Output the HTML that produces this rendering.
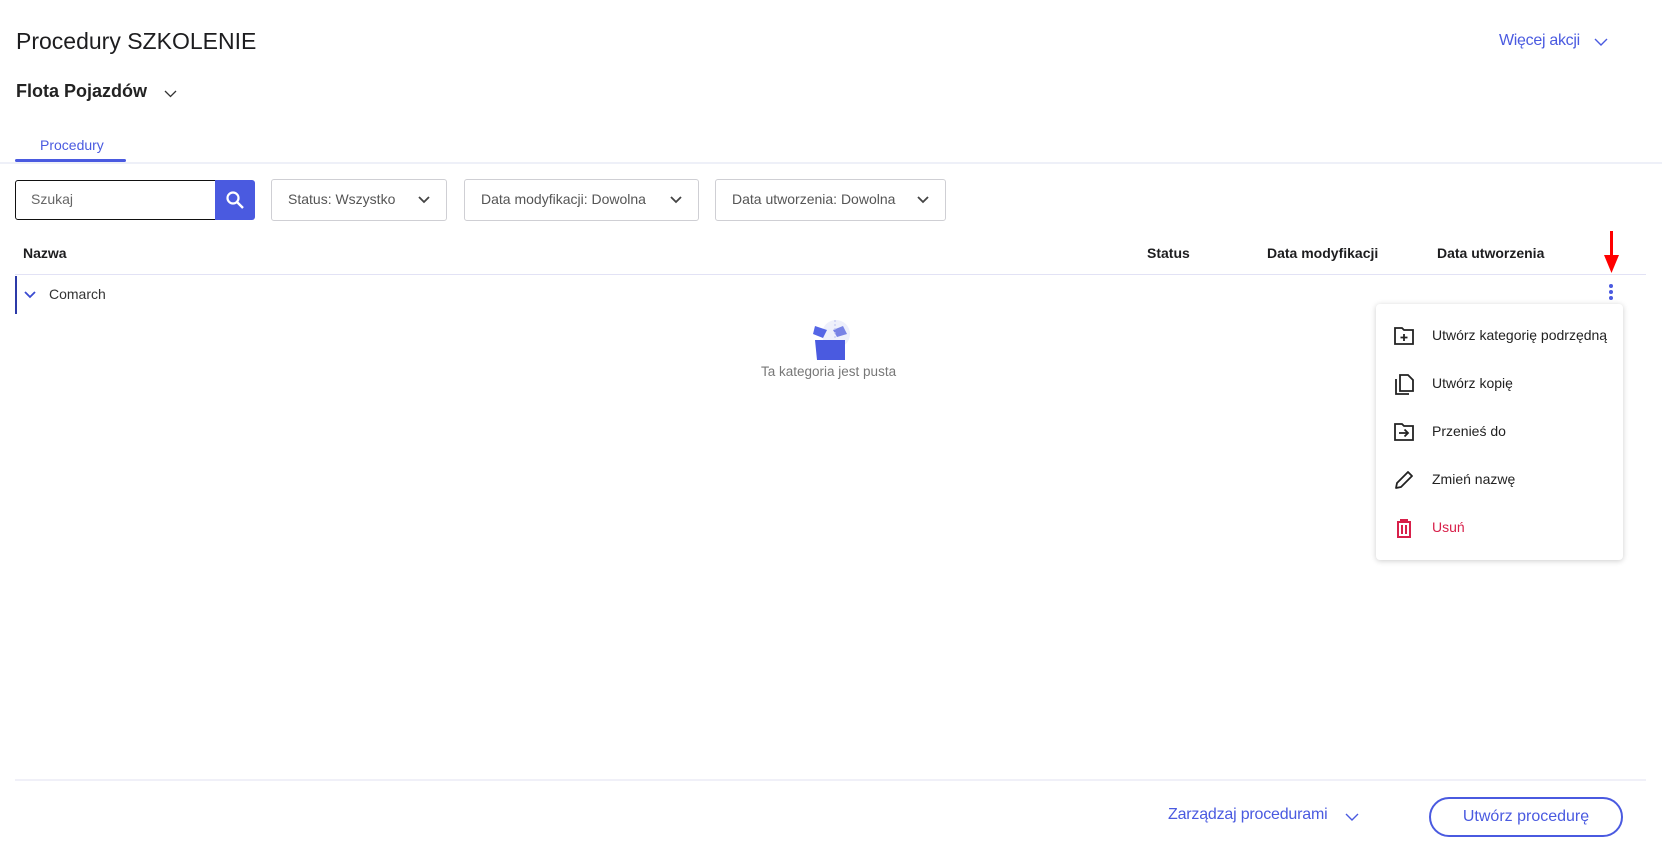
<!DOCTYPE html>
<html><head><meta charset="utf-8"><style>
*{margin:0;padding:0;box-sizing:border-box}
body{width:1662px;height:851px;background:#fff;font-family:"Liberation Sans",sans-serif;color:#1d1d1f;position:relative;overflow:hidden}
.a{position:absolute;white-space:nowrap}
.blue{color:#4a5ae0}
.dd{position:absolute;border:1px solid #cfcfd4;border-radius:3px;height:42px;top:179px;font-size:14px;color:#555;padding:11px 16px}
.dd svg{position:absolute;right:16px;top:16px}
.hd{font-size:14px;font-weight:bold;top:245px}
.mi{position:absolute;left:1432px;font-size:14px;color:#222}
.ic{position:absolute;left:1393px}
</style></head><body>
<div class="a" style="left:16px;top:28px;font-size:23px">Procedury SZKOLENIE</div>
<div class="a blue" style="left:1499px;top:32px;font-size:16px;letter-spacing:-0.3px">Więcej akcji</div>
<svg class="a" style="left:1594px;top:38px" width="14" height="9"><path d="M1 1l6 6 6-6" stroke="#4a5ae0" stroke-width="1.4" fill="none"/></svg>
<div class="a" style="left:16px;top:81px;font-size:18px;font-weight:bold;color:#222">Flota Pojazdów</div>
<svg class="a" style="left:164px;top:90px" width="13" height="8"><path d="M1 1l5.5 5.5L12 1" stroke="#333" stroke-width="1.3" fill="none"/></svg>
<div class="a blue" style="left:40px;top:137px;font-size:14px">Procedury</div>
<div class="a" style="left:0;top:162px;width:1662px;height:2px;background:#eef0f8"></div>
<div class="a" style="left:15px;top:159px;width:111px;height:3px;border-radius:2px;background:#4a5ae0"></div>
<div class="a" style="left:15px;top:180px;width:202px;height:40px;border:1.5px solid #111;border-radius:3px 0 0 3px;font-size:14px;color:#666;padding:10px 15px">Szukaj</div>
<div class="a" style="left:215px;top:180px;width:40px;height:40px;background:#4a5ae0;border-radius:0 3px 3px 0"></div>
<svg class="a" style="left:225px;top:190px" width="20" height="20"><circle cx="8" cy="8" r="5.5" stroke="#fff" stroke-width="2.2" fill="none"/><path d="M12 12l6 6" stroke="#fff" stroke-width="2.4"/></svg>
<div class="dd" style="left:271px;width:176px">Status: Wszystko<svg width="12" height="8"><path d="M1 1l5 5 5-5" stroke="#444" stroke-width="1.8" fill="none"/></svg></div>
<div class="dd" style="left:464px;width:235px">Data modyfikacji: Dowolna<svg width="12" height="8"><path d="M1 1l5 5 5-5" stroke="#444" stroke-width="1.8" fill="none"/></svg></div>
<div class="dd" style="left:715px;width:231px">Data utworzenia: Dowolna<svg width="12" height="8"><path d="M1 1l5 5 5-5" stroke="#444" stroke-width="1.8" fill="none"/></svg></div>
<div class="a hd" style="left:23px">Nazwa</div>
<div class="a hd" style="left:1147px">Status</div>
<div class="a hd" style="left:1267px">Data modyfikacji</div>
<div class="a hd" style="left:1437px">Data utworzenia</div>
<div class="a" style="left:15px;top:274px;width:1631px;height:1px;background:#e2e2f5"></div>
<div class="a" style="left:15px;top:276px;width:2px;height:38px;background:#2c3aa8"></div>
<svg class="a" style="left:24px;top:291px" width="12" height="8"><path d="M1 1l5 5 5-5" stroke="#3a4ad0" stroke-width="1.8" fill="none"/></svg>
<div class="a" style="left:49px;top:286px;font-size:14px;color:#333">Comarch</div>
<svg class="a" style="left:803px;top:312px" width="56" height="50"><circle cx="33" cy="22" r="14" fill="#eef0fb"/><path d="M12 28h30v20H14z" fill="#4a5ae0"/><path d="M12 14l12 4-4 8-10-4z" fill="#5566e6"/><path d="M30 18l10-4 4 8-10 3z" fill="#5a68e0" opacity=".8"/><path d="M32 8v18" stroke="#b9c0f0" stroke-dasharray="2 2"/></svg>
<div class="a" style="left:761px;top:364px;font-size:13.5px;color:#777">Ta kategoria jest pusta</div>
<div class="a" style="left:1610px;top:231px;width:3px;height:26px;background:#f00"></div>
<svg class="a" style="left:1604px;top:255px" width="15" height="18"><path d="M0 0h15L7.5 18z" fill="#f00"/></svg>
<div class="a" style="left:1609px;top:284px;width:4px;height:4px;border-radius:2px;background:#4a5ae0"></div>
<div class="a" style="left:1609px;top:290px;width:4px;height:4px;border-radius:2px;background:#4a5ae0"></div>
<div class="a" style="left:1609px;top:296px;width:4px;height:4px;border-radius:2px;background:#4a5ae0"></div>
<div class="a" style="left:1376px;top:304px;width:247px;height:256px;background:#fff;border-radius:4px;box-shadow:0 1px 6px rgba(0,0,0,.2)"></div>
<svg class="ic" style="top:326px" width="22" height="20"><path d="M2 2h7l2 2h9v14H2z" stroke="#222" stroke-width="1.8" fill="none"/><path d="M11 8v7M7.5 11.5h7" stroke="#222" stroke-width="1.8"/></svg>
<div class="mi" style="top:327px">Utwórz kategorię podrzędną</div>
<svg class="ic" style="top:373px" width="22" height="24"><path d="M3 6v15h13" stroke="#222" stroke-width="1.8" fill="none"/><path d="M7 2h8l5 5v11H7z" stroke="#222" stroke-width="1.8" fill="none"/></svg>
<div class="mi" style="top:375px">Utwórz kopię</div>
<svg class="ic" style="top:422px" width="22" height="20"><path d="M2 2h7l2 2h9v14H2z" stroke="#222" stroke-width="1.8" fill="none"/><path d="M6 11h9M11.5 7.5l3.5 3.5-3.5 3.5" stroke="#222" stroke-width="1.8" fill="none"/></svg>
<div class="mi" style="top:423px">Przenieś do</div>
<svg class="ic" style="top:469px" width="22" height="22"><path d="M3 19l1-5L15 3l4 4L8 18z" stroke="#222" stroke-width="1.8" fill="none" stroke-linejoin="round"/></svg>
<div class="mi" style="top:471px">Zmień nazwę</div>
<svg class="ic" style="top:517px" width="22" height="22"><path d="M4 5h14M8 5V3h6v2M5 5v15h12V5M9 8v9M13 8v9" stroke="#d8204a" stroke-width="2" fill="none"/></svg>
<div class="mi" style="top:519px;color:#d8204a">Usuń</div>
<div class="a" style="left:15px;top:779px;width:1631px;height:2px;background:#f0f0f8"></div>
<div class="a blue" style="left:1168px;top:806px;font-size:16px;letter-spacing:-0.2px">Zarządzaj procedurami</div>
<svg class="a" style="left:1345px;top:813px" width="14" height="9"><path d="M1 1l6 6 6-6" stroke="#4a5ae0" stroke-width="1.4" fill="none"/></svg>
<div class="a blue" style="left:1429px;top:797px;width:194px;height:40px;border:2px solid #4a5ae0;border-radius:20px;font-size:16px;text-align:center;line-height:36px">Utwórz procedurę</div>
</body></html>
